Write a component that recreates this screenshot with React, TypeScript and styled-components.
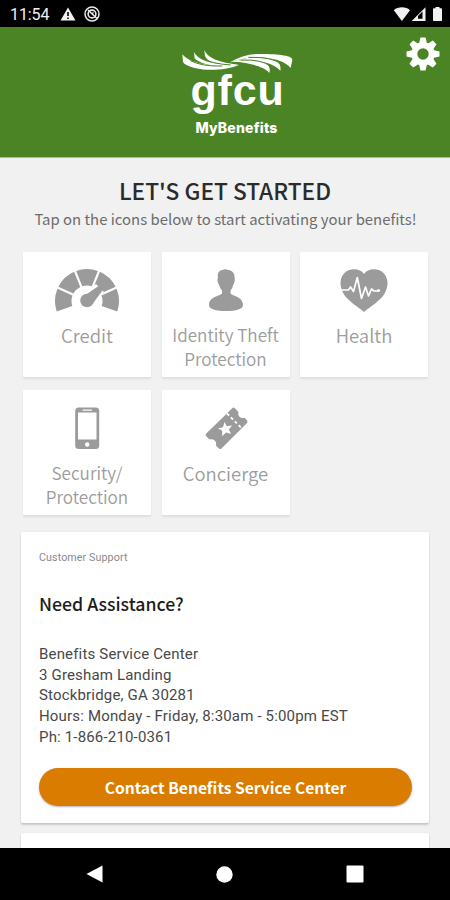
import React from "react";
import styled, { createGlobalStyle } from "styled-components";

const Global = createGlobalStyle`
  * { box-sizing: border-box; }
  body { margin: 0; background: #f1f1f1; }
`;

const sans = `"Noto Sans CJK SC", "Noto Sans", sans-serif`;
const roboto = `Roboto, "Liberation Sans", sans-serif`;

const Screen = styled.div`
  width: 450px;
  height: 900px;
  display: flex;
  flex-direction: column;
  overflow: hidden;
  background: #f1f1f1;
  font-family: ${sans};
`;

const StatusBar = styled.div`
  flex: none;
  height: 27px;
  background: #000;
  color: #f2f2f2;
  display: flex;
  align-items: center;
  justify-content: space-between;
  padding: 0 7px 0 10px;
`;

const StatusGroup = styled.div<{ $gap: number }>`
  display: flex;
  align-items: center;
  gap: ${(p) => p.$gap}px;
`;

const Clock = styled.span`
  font: 400 16px/27px ${roboto};
  width: 39px;
  margin-right: 3px;
  padding-top: 1px;
  letter-spacing: -0.1px;
`;

const Header = styled.header`
  flex: none;
  height: 131px;
  background: #4b8424;
  border-bottom: 1px solid #a9bf99;
  display: grid;
  grid-template-columns: 50px 1fr 50px;
`;

const Brand = styled.div`
  grid-column: 2;
  display: flex;
  flex-direction: column;
  align-items: center;
  padding: 23px 0 0 23px;
  color: #fff;
`;

const BrandName = styled.div`
  font: 700 43px/40px "Liberation Sans", Arial, sans-serif;
  letter-spacing: 0.8px;
  margin: -4px 0 0 2px;
`;

const BrandSub = styled.div`
  font: 800 14px/16px Inter, sans-serif;
  letter-spacing: 0.2px;
  margin-top: 10px;
`;

const SettingsButton = styled.button`
  grid-column: 3;
  align-self: start;
  margin: 10px 0 0 6px;
  padding: 0;
  width: 34px;
  height: 34px;
  border: 0;
  background: none;
`;

const Main = styled.main`
  flex: 1;
  min-height: 0;
  overflow: hidden;
  display: flex;
  flex-direction: column;
  padding: 0 21px;
`;

const Title = styled.h1`
  margin: 18px 0 0;
  text-align: center;
  font: 500 22.7px/30px ${sans};
  color: #2b2b2b;
  white-space: nowrap;
`;

const Subtitle = styled.p`
  margin: 0;
  padding-left: 1px;
  text-align: center;
  font: 400 14.9px/26px ${sans};
  color: #6c6c6c;
  white-space: nowrap;
`;

const Tiles = styled.div`
  margin: 20px 1px 0 2px;
  display: grid;
  grid-template-columns: repeat(3, 128px);
  grid-auto-rows: 125px;
  column-gap: 10.5px;
  row-gap: 13px;
`;

const Tile = styled.div`
  background: #fff;
  border-radius: 1px;
  box-shadow: 0 2px 2px rgba(0, 0, 0, 0.08);
  display: flex;
  flex-direction: column;
  align-items: center;
  padding-top: 14px;
`;

const TileLabel = styled.div<{ $compact: boolean }>`
  margin-top: 9px;
  font: 350 ${(p) => (p.$compact ? 17.1 : 18.5)}px/24px ${sans};
  color: #9c9c9c;
  text-align: center;
  white-space: pre-line;
`;

const Card = styled.section`
  flex: none;
  margin-top: 17px;
  height: 291px;
  background: #fff;
  border-radius: 2px;
  box-shadow: 0 2px 2px rgba(0, 0, 0, 0.16), 0 0 2px rgba(0, 0, 0, 0.08);
  padding: 18px 17px 0 18px;
`;

const NextCard = styled(Card)`
  margin-top: 10px;
`;

const Eyebrow = styled.div`
  font: 400 10.7px/16px ${roboto};
  letter-spacing: 0.1px;
  color: #8a8a8a;
`;

const CardTitle = styled.h2`
  margin: 23px 0 0;
  font: 500 17.7px/28px ${sans};
  color: #1d1d1d;
`;

const Address = styled.div`
  margin-top: 27px;
  font: 400 15px/20.7px ${roboto};
  letter-spacing: 0.17px;
  color: #484848;
  white-space: pre-line;
`;

const ContactButton = styled.button`
  display: block;
  width: 373px;
  height: 38px;
  margin: 20px 0 0;
  padding: 0;
  border: 0;
  border-radius: 19px;
  background: #da7c00;
  box-shadow: 0 1px 2px rgba(0, 0, 0, 0.3);
  font: 700 15.6px/36px ${sans};
  color: #fff;
`;

const NavBar = styled.nav`
  flex: none;
  height: 52px;
  background: #000;
  display: flex;
  justify-content: space-between;
  align-items: center;
  padding: 0 86px;
`;

const Warning = () => (
  <svg width="16" height="14" viewBox="0 0 16 14">
    <path d="M8 .5 15.5 13.5H.5Z" fill="#f2f2f2" />
    <path d="M8 5v4M8 10.5v1.6" stroke="#000" strokeWidth="1.6" />
  </svg>
);

const Blocked = () => (
  <svg width="16" height="16" viewBox="0 0 16 16" fill="none" stroke="#e8e8e8">
    <circle cx="8" cy="8" r="7" strokeWidth="1.5" />
    <circle cx="8" cy="8" r="3.9" strokeWidth="1.6" />
    <path d="m4 4 9 8.5M7.5 8l2-1.5" strokeWidth="1.5" />
  </svg>
);

const SignalIcons = () => (
  <svg width="50" height="16" viewBox="0 0 50 16" fill="#f2f2f2">
    <path d="M.8 4.2C5 .4 12.800 .4 17 4.200L8.900 15Z" />
    <path d="M32.500 1.200V15H18.700Z" />
    <path d="M29.500 5.500V12.800H25V10Z" fill="#000" />
    <path d="M42.500 1h4v1.200h1.700q.8 0 .8.800v11.200q0 .8-.8.800h-7.400q-.8 0-.8-.8V3q0-.8.800-.8h1.700Z" />
  </svg>
);

const teeth = [0, 45, 90, 135, 180, 225, 270, 315];

const Gear = () => (
  <svg width="34" height="34" viewBox="-17 -17 34 34">
    {teeth.map((a) => (
      <path key={a} d="M-4-10-2.600-16.500H2.600L4-10Z" fill="#fff" transform={`rotate(${a})`} />
    ))}
    <circle r="8.700" fill="none" stroke="#fff" strokeWidth="6" />
  </svg>
);

const Wings = () => (
  <svg width="112" height="24" viewBox="16 15 336 72" fill="#fff">
    <path d="M20 28C35 48 70 56 100 60 130 64 165 62 190 60 160 72 120 76 95 74 60 72 25 62 22 50Z" />
    <path d="M55 21C65 42 95 52 125 56L190 60C150 66 115 64 92 58 72 52 60 44 57 40Z" />
    <path d="M86 15C97 38 120 46 150 53L190 60C150 60 120 56 105 50 95 44 90 38 88 33Z" />
    <path d="M44 47Q80 65 140 63M76 38Q105 56 165 60" fill="none" stroke="#4b8424" strokeWidth="3" />
    <path d="M163 52C190 36 220 27 250 27 295 27 350 30 350 44L345 69C330 50 300 41 270 38 230 34 200 40 163 52Z" />
    <path d="M163 52C200 38 240 35 275 40 302 45 318 53 314 77 300 60 270 51 245 48 215 44 190 46 163 52Z" />
    <path d="M163 52C200 43 230 44 255 49 277 56 286 66 281 84 268 68 240 61 220 56 200 51 180 50 163 52Z" />
    <path d="M195 45Q260 43 285 64M218 37Q290 35 318 58" fill="none" stroke="#4b8424" strokeWidth="3" />
  </svg>
);

const GRAY = "#9b9b9b";

const polar = (r: number, deg: number) => {
  const a = (deg * Math.PI) / 180;
  return `${(r * Math.cos(a)).toFixed(2)} ${(-r * Math.sin(a)).toFixed(2)}`;
};

const gaugeSegment = (i: number) => {
  const lead = i > 0 ? 1 : 0;
  const trail = i < 4 ? 1 : 0;
  const start = 199 - i * 43.6;
  const end = start - 43.6;
  return [
    `M${polar(32, start - 2 * lead)}`,
    `A32 32 0 0 1 ${polar(32, end + 2 * trail)}`,
    `L${polar(15.5, end + 4 * trail)}`,
    `A15.5 15.5 0 0 0 ${polar(15.5, start - 4 * lead)}Z`,
  ].join("");
};

const Gauge = () => (
  <svg width="66" height="48" viewBox="-33 -35 66 48" fill={GRAY}>
    {[0, 1, 2, 3, 4].map((i) => (
      <path key={i} d={gaugeSegment(i)} />
    ))}
    <path d="M7.500-15.500 15.500-7.500" stroke="#fff" strokeWidth="4" />
    <path d="M-3-5 11.500-15 22-21 15.500-10.500 5.500 3Z" />
    <circle r="6.800" cy="-.5" />
  </svg>
);

const Person = () => (
  <svg width="36" height="48" viewBox="0 1.5 36 48" fill={GRAY}>
    <path d="M14.500 5.500C17 4 18.500 5.300 20.500 5.500 24 6 26.500 8.500 26.500 12c0 2 .7 3 .1 5-.5 2-.9 2.500-1.400 3.500-.7 2.500-1.300 4-2.600 5.500v3C24 31.500 35 32 35 40.500 35 44.500 28 46.500 18 46.500S1 44.500 1 40.500C1 32 12.500 31.500 14 29V26c-1.500-1.500-2.200-3.500-2.800-5.500-.8-1-1.200-2-1.600-3.500-.5-2 .3-3 .3-5-.6-3 1-6.200 4.600-6.500Z" />
  </svg>
);

const Heart = () => (
  <svg width="50" height="48" viewBox="0 1 50 48" fill={GRAY}>
    <path d="M25 9C29 3 39 3 44 7.500 51 14 49 24 44 31 39 37 31 42 25 47 19 42 11 37 6 31 1 24-1 14 6 7.500 11 3 21 3 25 9Z" />
    <path d="M1 25h8.500l2-3 3 4.500L18.300 12.500l4.200 21 4-11.500 3 9 3-7 2.500 2h4" fill="none" stroke="#fff" strokeWidth="1.700" strokeLinejoin="round" />
    <circle cx="39.500" cy="25.500" r="1.600" fill="#fff" />
  </svg>
);

const Phone = () => (
  <svg width="26" height="48" viewBox="0 .5 26 48">
    <rect x="1.200" y="4" width="24" height="41.500" rx="3.500" fill={GRAY} />
    <path d="M4 9h18.500v27H4Z" fill="#fff" />
    <path d="M9 6.600h8.500" stroke="#fff" strokeWidth="1.400" strokeLinecap="round" />
    <circle cx="13.200" cy="41" r="2.200" fill="#fff" />
  </svg>
);

const Ticket = () => (
  <svg width="44" height="48" viewBox="0 0 44 48">
    <path d="M28.500 4Q30 3 31 4.500l3.500 3.500c-1 4 2 7 6 5.800L43 16.500q1 1.500 0 2.500L17.500 44.500q-1.200 1-2.500 0L12 41.500c1-4-2-7.500-6.500-6L2 32q-1-1.200 0-2.200Z" fill={GRAY} />
    <path d="m23 9.500 15 15" stroke="#fff" strokeWidth="1.800" strokeDasharray="3 2.500" />
    <path d="m20.500 18 2.300 4.300 5.300-.8-3.300 4 2.300 4.500-5-1.500-4 3.700.2-5.200-4.300-2.700 5-1Z" fill="#fff" />
  </svg>
);

const services = [
  { label: "Credit", Icon: Gauge },
  { label: "Identity Theft\nProtection", Icon: Person },
  { label: "Health", Icon: Heart },
  { label: "Security/\nProtection", Icon: Phone },
  { label: "Concierge", Icon: Ticket },
];

const address = [
  "Benefits Service Center",
  "3 Gresham Landing",
  "Stockbridge, GA 30281",
  "Hours: Monday - Friday, 8:30am - 5:00pm EST",
  "Ph: 1-866-210-0361",
].join("\n");

export default function App() {
  return (
    <Screen>
      <Global />
      <StatusBar>
        <StatusGroup $gap={8}>
          <Clock>11:54</Clock>
          <Warning />
          <Blocked />
        </StatusGroup>
        <SignalIcons />
      </StatusBar>
      <Header>
        <Brand>
          <Wings />
          <BrandName>gfcu</BrandName>
          <BrandSub>MyBenefits</BrandSub>
        </Brand>
        <SettingsButton aria-label="Settings">
          <Gear />
        </SettingsButton>
      </Header>
      <Main>
        <Title>LET'S GET STARTED</Title>
        <Subtitle>Tap on the icons below to start activating your benefits!</Subtitle>
        <Tiles>
          {services.map(({ label, Icon }) => (
            <Tile key={label}>
              <Icon />
              <TileLabel $compact={label.includes("\n")}>{label}</TileLabel>
            </Tile>
          ))}
        </Tiles>
        <Card>
          <Eyebrow>Customer Support</Eyebrow>
          <CardTitle>Need Assistance?</CardTitle>
          <Address>{address}</Address>
          <ContactButton>Contact Benefits Service Center</ContactButton>
        </Card>
        <NextCard />
      </Main>
      <NavBar>
        <svg width="17" height="18" viewBox="0 0 17 18">
          <path d="M16.500.5v17L.5 9Z" fill="#fff" />
        </svg>
        <svg width="17" height="17" viewBox="0 0 17 17">
          <circle cx="8.500" cy="8.500" r="8.200" fill="#fff" />
        </svg>
        <svg width="18" height="18" viewBox="0 0 18 18">
          <rect x=".5" y=".5" width="17" height="17" rx="1" fill="#fff" />
        </svg>
      </NavBar>
    </Screen>
  );
}
